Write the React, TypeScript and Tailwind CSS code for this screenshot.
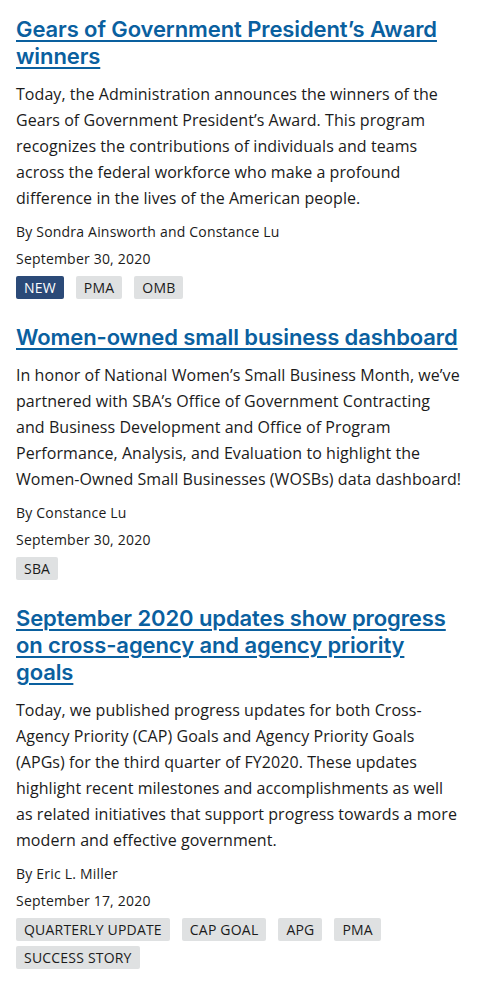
import type { ReactNode } from "react";

type Post = {
  title: string;
  body: ReactNode;
  authors: string;
  date: string;
  tags: { label: string; dark?: boolean }[];
};

const posts: Post[] = [
  {
    title: "Gears of Government President’s Award winners",
    body: "Today, the Administration announces the winners of the Gears of Government President’s Award. This program recognizes the contributions of individuals and teams across the federal workforce who make a profound difference in the lives of the American people.",
    authors: "By Sondra Ainsworth and Constance Lu",
    date: "September 30, 2020",
    tags: [{ label: "NEW", dark: true }, { label: "PMA" }, { label: "OMB" }],
  },
  {
    title: "Women-owned small business dashboard",
    body: (
      <>
        In honor of National Women’s Small Business Month, we’ve partnered with SBA’s Office of Government Contracting
        <br />
        and Business Development and Office of Program Performance, Analysis, and Evaluation to highlight the
        Women-Owned Small Businesses (WOSBs) data dashboard!
      </>
    ),
    authors: "By Constance Lu",
    date: "September 30, 2020",
    tags: [{ label: "SBA" }],
  },
  {
    title: "September 2020 updates show progress on cross-agency and agency priority goals",
    body: "Today, we published progress updates for both Cross-Agency Priority (CAP) Goals and Agency Priority Goals (APGs) for the third quarter of FY2020. These updates highlight recent milestones and accomplishments as well as related initiatives that support progress towards a more modern and effective government.",
    authors: "By Eric L. Miller",
    date: "September 17, 2020",
    tags: [
      { label: "QUARTERLY UPDATE" },
      { label: "CAP GOAL" },
      { label: "APG" },
      { label: "PMA" },
      { label: "SUCCESS STORY" },
    ],
  },
];

function PostItem({ post }: { post: Post }) {
  return (
    <article className="mt-[25px] first:mt-0">
      <h2 className="text-[22px] leading-[27px] font-semibold tracking-[-0.1px] font-['Inter',sans-serif]">
        <a href="#" className="text-[#0a609f] underline decoration-[1.5px] underline-offset-[3px]">
          {post.title}
        </a>
      </h2>
      <p className="mt-[11px] text-base leading-[26px] tracking-[0.06px] text-[#1b1b1b]">{post.body}</p>
      <div className="mt-[7px] text-sm leading-[27px] tracking-[0.2px] text-[#1b1b1b]">{post.authors}</div>
      <div className="text-sm leading-[27px] tracking-[0.2px] text-[#1b1b1b]">{post.date}</div>
      <ul className="mt-[4px] flex flex-wrap gap-x-3 gap-y-[5px]">
        {post.tags.map((t) => (
          <li
            key={t.label}
            className={`h-[23px] px-2 rounded-[2px] text-sm leading-[23px] tracking-[0.2px] ${
              t.dark ? "bg-[#2b4a78] text-white" : "bg-[#dfe1e2] text-[#1b1b1b]"
            }`}
          >
            {t.label}
          </li>
        ))}
      </ul>
    </article>
  );
}

export default function App() {
  return (
    <main className="min-h-[998px] bg-white px-4 pt-[16px] font-['Open_Sans',sans-serif]">
      {posts.map((p) => (
        <PostItem key={p.title} post={p} />
      ))}
    </main>
  );
}
